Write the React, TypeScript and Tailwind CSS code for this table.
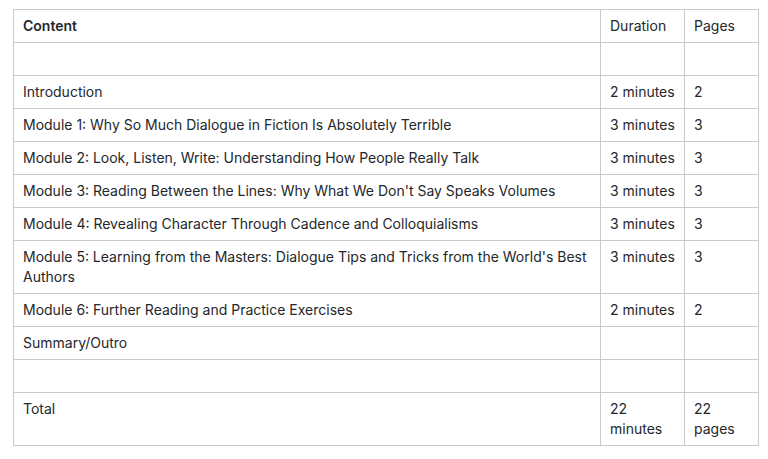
// Kursusoversigt: indhold, varighed og sider i en enkel tabel.

const rows: { content: string; duration: string; pages: string }[] = [
  { content: "", duration: "", pages: "" },
  { content: "Introduction", duration: "2 minutes", pages: "2" },
  {
    content: "Module 1: Why So Much Dialogue in Fiction Is Absolutely Terrible",
    duration: "3 minutes",
    pages: "3",
  },
  {
    content: "Module 2: Look, Listen, Write: Understanding How People Really Talk",
    duration: "3 minutes",
    pages: "3",
  },
  {
    content: "Module 3: Reading Between the Lines: Why What We Don't Say Speaks Volumes",
    duration: "3 minutes",
    pages: "3",
  },
  {
    content: "Module 4: Revealing Character Through Cadence and Colloquialisms",
    duration: "3 minutes",
    pages: "3",
  },
  {
    content:
      "Module 5: Learning from the Masters: Dialogue Tips and Tricks from the World's Best Authors",
    duration: "3 minutes",
    pages: "3",
  },
  {
    content: "Module 6: Further Reading and Practice Exercises",
    duration: "2 minutes",
    pages: "2",
  },
  { content: "Summary/Outro", duration: "", pages: "" },
  { content: "", duration: "", pages: "" },
  { content: "Total", duration: "22 minutes", pages: "22 pages" },
];

const cell = "border border-[#c9cacf] px-[9px] py-1.5 align-top h-[33px]";

export default function App() {
  return (
    <div className="min-h-screen bg-white pt-[9px] pl-[13px] font-['Inter',sans-serif] text-[14px] leading-5 text-[#24272b]">
      <table className="w-[745px] table-fixed border-collapse">
        <colgroup>
          <col className="w-[587px]" />
          <col className="w-[84px]" />
          <col className="w-[74px]" />
        </colgroup>
        <thead>
          <tr>
            <th className={`${cell} text-left font-semibold`}>Content</th>
            <th className={`${cell} text-left font-normal`}>Duration</th>
            <th className={`${cell} text-left font-normal`}>Pages</th>
          </tr>
        </thead>
        <tbody>
          {rows.map((row, i) => (
            <tr key={i}>
              <td className={cell}>{row.content}</td>
              <td className={cell}>{row.duration}</td>
              <td className={cell}>{row.pages}</td>
            </tr>
          ))}
        </tbody>
      </table>
    </div>
  );
}
